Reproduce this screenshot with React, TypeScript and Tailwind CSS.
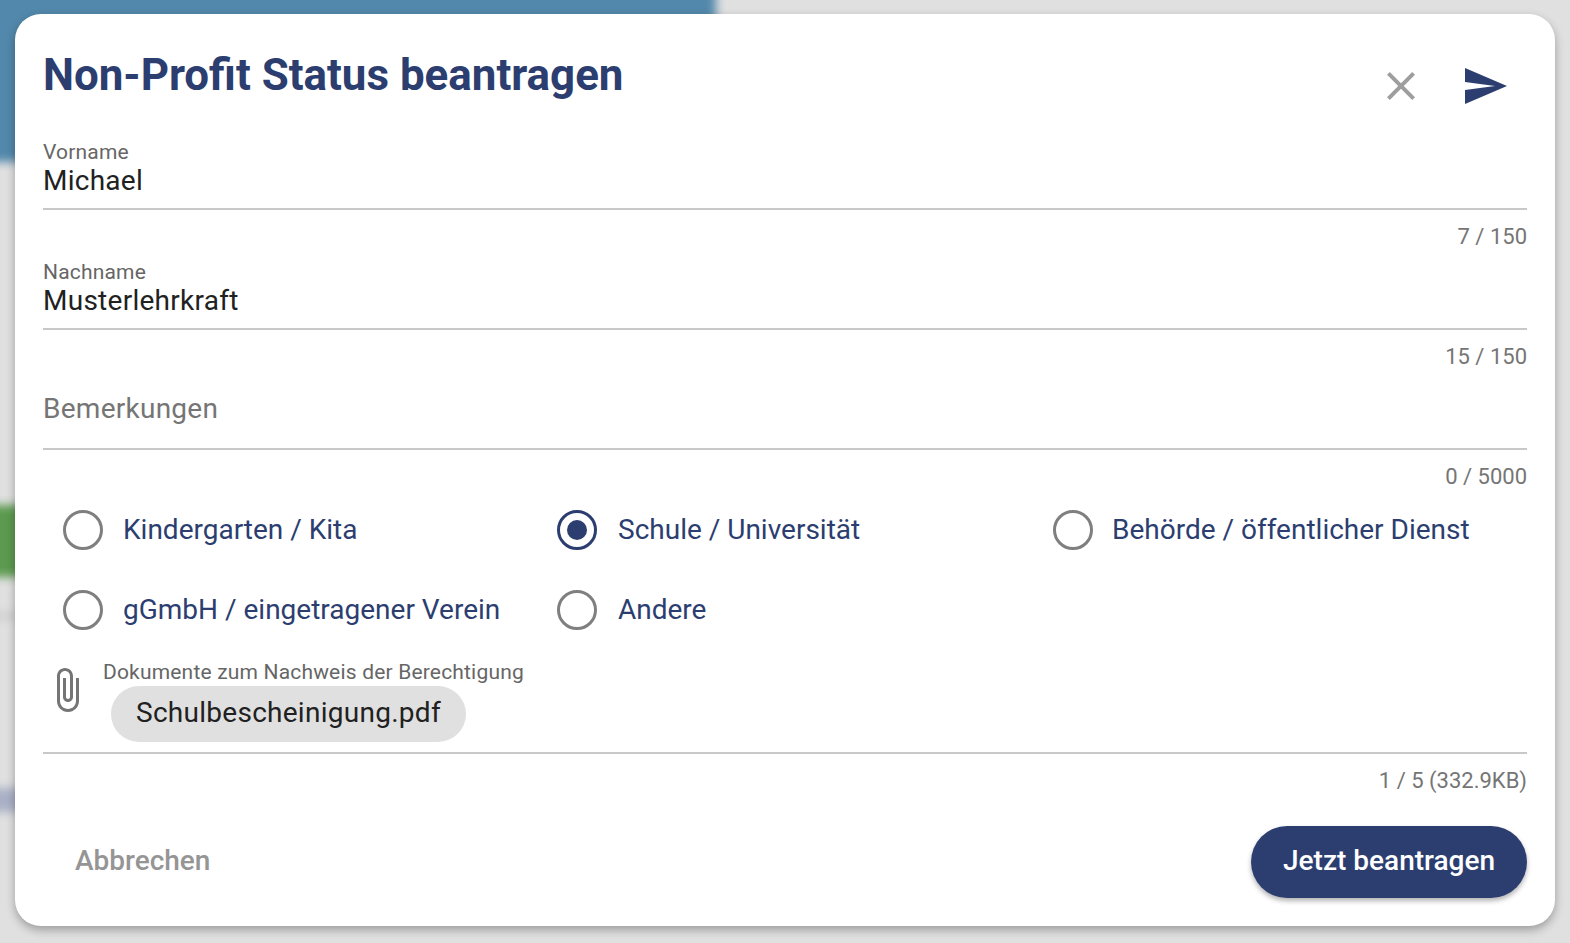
const navy = "text-[#2c3e70]"

function Field({ label, value, count }: { label: string; value?: string; count: string }) {
  return (
    <div className="h-[120px]">
      <div className="h-[68px]">
        {value ? (
          <>
            <div className="h-6 text-[21px] leading-6 tracking-[0.18px] text-[#666666]">{label}</div>
            <div className="h-11 text-[28px] leading-[34px] tracking-[0.26px] text-[#212121]">{value}</div>
          </>
        ) : (
          <div className="pt-[11px] text-[28px] leading-[36px] tracking-[0.26px] text-[#757575]">{label}</div>
        )}
      </div>
      <div className="h-0.5 bg-[#c8c8c8]" />
      <div className="mt-[15px] text-right text-[22px] leading-6 text-[#757575]">{count}</div>
    </div>
  )
}

function Radio({ label, checked = false, gap = "gap-5" }: { label: string; checked?: boolean; gap?: string }) {
  return (
    <div className={`flex h-20 items-center pl-5 ${gap}`}>
      <span
        className={`flex h-10 w-10 shrink-0 items-center justify-center rounded-full border-[3px] ${
          checked ? "border-[#2c3e70]" : "border-[#7f7f7f]"
        }`}
      >
        {checked && <span className="h-5 w-5 rounded-full bg-[#2c3e70]" />}
      </span>
      <span className={`text-[28px] ${navy}`}>{label}</span>
    </div>
  )
}

export default function App() {
  return (
    <div className="relative h-[943px] w-[1570px] overflow-hidden bg-[#e0e0e0] font-['Roboto',sans-serif]">
      {/* dimmed, blurred page behind the dialog */}
      <div className="absolute left-[-20px] top-[-20px] h-[182px] w-[736px] bg-[#5288ab] blur-[5px]" />
      <div className="absolute left-[-20px] top-[505px] h-[72px] w-[60px] bg-[#5c9a4f] blur-[5px]" />
      <div className="absolute left-[-20px] top-[612px] h-[8px] w-[60px] bg-[#cfcfcf] blur-[5px]" />
      <div className="absolute left-[-20px] top-[788px] h-[24px] w-[60px] bg-[#a9b0c6] blur-[5px]" />

      <div className="relative mx-[15px] mt-[14px] h-[912px] w-[1540px] rounded-[26px] bg-white px-[28px] shadow-[0_4px_10px_rgba(0,0,0,0.3)]">
        <div className="flex h-[126px] justify-between">
          <h1 className={`pt-[33px] text-[43.9px] font-bold leading-[56px] ${navy}`}>Non-Profit Status beantragen</h1>
          <div className="mr-[18px] flex gap-9 pt-[48px]">
            <button className="h-12 w-12 text-[#9e9e9e]">
              <svg viewBox="0 0 24 24" className="h-12 w-12 fill-current">
                <path d="M19 6.41 17.59 5 12 10.59 6.41 5 5 6.41 10.59 12 5 17.59 6.41 19 12 13.41 17.59 19 19 17.59 13.41 12z" />
              </svg>
            </button>
            <button className={`h-12 w-12 ${navy}`}>
              <svg viewBox="0 0 24 24" className="h-12 w-12 fill-current">
                <path d="M2.01 21 23 12 2.01 3 2 10l15 2-15 2z" />
              </svg>
            </button>
          </div>
        </div>

        <Field label="Vorname" value="Michael" count="7 / 150" />
        <Field label="Nachname" value="Musterlehrkraft" count="15 / 150" />
        <Field label="Bemerkungen" count="0 / 5000" />

        <div className="mt-[-10px] grid grid-cols-[494px_496px_1fr]">
          <Radio label="Kindergarten / Kita" />
          <Radio label="Schule / Universität" checked gap="gap-[21px]" />
          <Radio label="Behörde / öffentlicher Dienst" gap="gap-[19px]" />
          <Radio label="gGmbH / eingetragener Verein" />
          <Radio label="Andere" gap="gap-[21px]" />
        </div>

        <div className="flex h-[104px] items-start border-b-2 border-[#c8c8c8] pt-[10px]">
          <svg viewBox="0 0 24 24" className="mt-[6px] h-12 w-12 shrink-0 fill-[#757575]">
            <path d="M16.5 6v11.5c0 2.21-1.79 4-4 4s-4-1.79-4-4V5c0-1.38 1.12-2.5 2.5-2.5s2.5 1.12 2.5 2.5v10.5c0 .55-.45 1-1 1s-1-.45-1-1V6H10v9.5c0 1.38 1.12 2.5 2.5 2.5s2.5-1.12 2.5-2.5V5c0-2.21-1.79-4-4-4S7 2.79 7 5v12.5c0 3.04 2.46 5.5 5.5 5.5s5.5-2.46 5.5-5.5V6h-1.5z" />
          </svg>
          <div className="ml-3">
            <div className="text-[21px] leading-6 tracking-[0.18px] text-[#666666]">Dokumente zum Nachweis der Berechtigung</div>
            <div className="ml-2 mt-[2px] inline-flex h-14 items-center rounded-full bg-[#e0e0e0] px-[25px] pb-[2px] text-[28px] tracking-[0.27px] text-[#212121]">
              Schulbescheinigung.pdf
            </div>
          </div>
        </div>
        <div className="mt-[15px] text-right text-[22px] leading-6 text-[#757575]">1 / 5 (332.9KB)</div>

        <div className="mt-[33px] flex items-center justify-between">
          <button className="pb-[2px] pl-8 text-[28px] font-medium text-[#959595]">Abbrechen</button>
          <button className="h-[72px] rounded-full bg-[#2c3e70] px-8 pb-[2px] text-[28px] font-medium text-white shadow-[0_3px_5px_rgba(0,0,0,0.3)]">
            Jetzt beantragen
          </button>
        </div>
      </div>
    </div>
  )
}
